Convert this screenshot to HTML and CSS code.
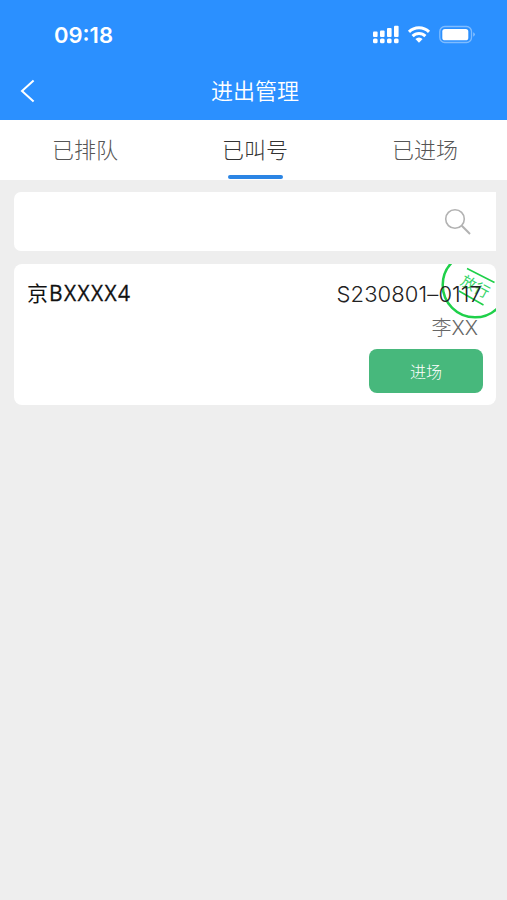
FILE: index.html
```html
<!DOCTYPE html>
<html lang="zh-CN">
<head>
    <meta charset="UTF-8">
    <meta name="viewport" content="width=device-width, initial-scale=1.0">
    <title>进出管理</title>
    <link rel="stylesheet" href="styles.css">
</head>
<body>
    <header>
        <div class="status-bar">
            <span class="time">09:18</span>
            <svg class="status-icons" width="104" height="20" viewBox="0 0 104 20" fill="#fff">
                <!-- signal -->
                <rect x="1" y="6.5" width="4.6" height="5.4" rx="1"/>
                <rect x="8" y="5.5" width="4.6" height="6.4" rx="1"/>
                <rect x="15" y="3.1" width="4.6" height="8.8" rx="1"/>
                <rect x="22" y="0.7" width="4.6" height="11.2" rx="1"/>
                <rect x="1" y="13.5" width="4.6" height="4.8" rx="1.5"/>
                <rect x="8" y="13.5" width="4.6" height="4.8" rx="1.5"/>
                <rect x="15" y="13.5" width="4.6" height="4.8" rx="1.5"/>
                <rect x="22" y="13.5" width="4.6" height="4.8" rx="1.5"/>
                <!-- wifi -->
                <g fill="none" stroke="#fff" stroke-width="3">
                    <path d="M37 6.9a14 14 0 0 1 20 0"/>
                    <path d="M40.6 11.1a9 9 0 0 1 12.8 0"/>
                </g>
                <path d="M43.4 14.1a5 5 0 0 1 7.2 0L47 17.7z"/>
                <!-- battery -->
                <rect x="67.8" y="1.5" width="31.7" height="16" rx="5" fill="none" stroke="#fff" stroke-opacity=".4" stroke-width="1.3"/>
                <rect x="70.3" y="3.9" width="26" height="11.4" rx="2.6"/>
                <path d="M101.3 7.3q3 2.2 0 4.4z" fill-opacity=".5"/>
            </svg>
        </div>
        <div class="nav-bar">
            <svg class="back" width="16" height="24" viewBox="0 0 16 24">
                <path d="M13.6 1.4L2 12l11.6 10.6" fill="none" stroke="#fff" stroke-width="2"/>
            </svg>
            <h1>进出管理</h1>
        </div>
    </header>
    <nav class="tabs">
        <a class="tab">已排队</a>
        <a class="tab active">已叫号</a>
        <a class="tab">已进场</a>
    </nav>
    <main>
        <div class="search">
            <svg width="28" height="28" viewBox="0 0 28 28" fill="none" stroke="#b2b2b2">
                <circle cx="11" cy="11" r="9.3" stroke-width="1.6"/>
                <path d="M17.8 17.8L26 26" stroke-width="2"/>
            </svg>
        </div>
        <div class="card">
            <svg class="stamp" width="70" height="70" viewBox="0 0 70 70">
                <circle cx="35" cy="35" r="32.3" fill="none" stroke="#1fd04a" stroke-width="2.5"/>
                <path d="M27 18.5l27.5 14M19 41l24.5 14" stroke="#1fd04a" stroke-width="1.5"/>
                <text x="35" y="42" text-anchor="middle" transform="rotate(28 35 37)">放行</text>
            </svg>
            <div class="row">
                <span class="plate">京<b>BXXXX4</b></span>
                <span class="number">S230801–0117</span>
            </div>
            <div class="driver">李<span>XX</span></div>
            <button class="enter">进场</button>
        </div>
    </main>
</body>
</html>
```

FILE: styles.css
```css
* {
    box-sizing: border-box;
}
body {
    margin: 0;
    min-height: 900px;
    background-color: #eee;
    font-family: "Noto Sans CJK SC", sans-serif;
    font-weight: 300;
}
header {
    height: 119.5px;
    background-color: #2b90ff;
    color: #fff;
}
.status-bar {
    display: flex;
    justify-content: space-between;
    align-items: center;
    height: 69px;
    padding: 0 31px 0 54px;
}
.time {
    font-family: Inter, sans-serif;
    font-size: 22px;
    font-weight: 600;
}
.nav-bar {
    display: grid;
    grid-template-columns: 24px 1fr 24px;
    align-items: center;
    height: 44px;
    padding: 0 17px 0 20px;
}
h1 {
    margin: 0;
    padding-bottom: 4px;
    font-size: 22px;
    font-weight: 350;
    text-align: center;
}
.tabs {
    display: flex;
    height: 60px;
    overflow: hidden;
    background-color: #fff;
}
.tab {
    flex: 0 0 170px;
    display: flex;
    flex-direction: column;
    align-items: center;
    line-height: 57px;
    font-size: 22px;
    color: #555;
}
.active {
    color: #333;
}
.active::after {
    content: "";
    width: 55px;
    height: 4px;
    margin-top: -2px;
    border-radius: 2px;
    background-color: #2b85e4;
}
main {
    padding: 12.5px 11px 0 14px;
}
.search {
    display: flex;
    justify-content: flex-end;
    align-items: center;
    height: 59px;
    padding-right: 24px;
    border-radius: 7px 0 0 7px;
    background-color: #fff;
}
.card {
    position: relative;
    display: flex;
    flex-direction: column;
    align-items: flex-end;
    height: 141px;
    margin-top: 13px;
    padding: 14px 13px 0 14px;
    overflow: hidden;
    border-radius: 8px;
    background-color: #fff;
}
.stamp {
    position: absolute;
    top: -14px;
    right: -14px;
}
.stamp text {
    font-size: 15px;
    font-weight: 400;
    fill: #35d568;
}
.row {
    display: flex;
    justify-content: space-between;
    align-self: stretch;
    position: relative;
    height: 32px;
    line-height: 32px;
    color: #111;
}
.plate {
    margin-top: -2px;
    margin-left: -1px;
    font-size: 21px;
    font-weight: 400;
}
.plate b {
    margin-left: 1px;
    font-family: "Open Sans", sans-serif;
    font-weight: 500;
    letter-spacing: 1.4px;
    -webkit-text-stroke: 0.3px #111;
}
.number {
    margin-right: 1px;
    font-family: Inter, sans-serif;
    font-size: 22px;
    letter-spacing: 0.1px;
    color: #222;
}
.driver {
    height: 35px;
    padding-right: 5px;
    line-height: 34px;
    font-size: 20px;
    color: #666;
}
.driver span {
    font-family: Inter, sans-serif;
}
.enter {
    width: 114px;
    height: 44px;
    margin-top: 4px;
    border: none;
    border-radius: 8px;
    background-color: #47b87c;
    color: #fff;
    font-family: inherit;
    font-size: 16px;
    font-weight: 300;
}
```
